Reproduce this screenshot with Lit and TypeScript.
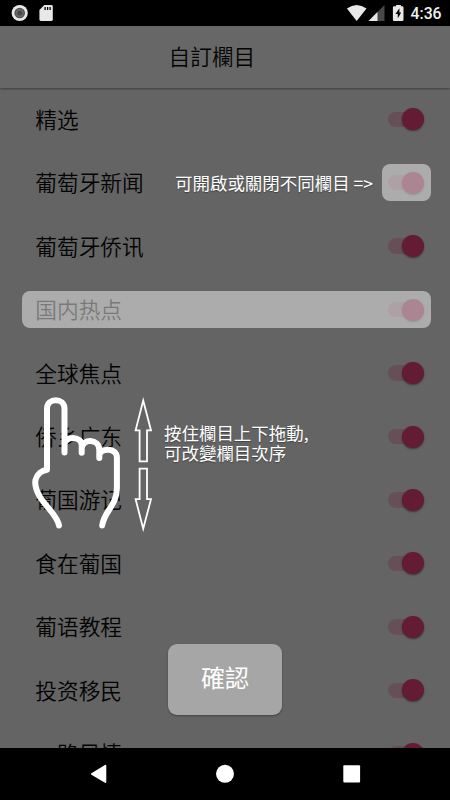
import { LitElement, html, css, svg } from "lit";
import { customElement, property } from "lit/decorators.js";

const CHANNELS = [
  "精选",
  "葡萄牙新闻",
  "葡萄牙侨讯",
  "国内热点",
  "全球焦点",
  "侨乡广东",
  "葡国游记",
  "食在葡国",
  "葡语教程",
  "投资移民",
  "一路风情",
];

@customElement("status-bar")
export class StatusBar extends LitElement {
  static styles = css`
    :host {
      display: flex;
      justify-content: space-between;
      height: 26px;
      background: #000;
    }
    svg {
      display: block;
      flex: none;
    }
    .side {
      display: flex;
    }
    .time {
      width: 39.5px;
      font: 500 15.8px/28px Roboto, "Noto Sans", sans-serif;
      color: #f0f0f0;
      white-space: nowrap;
    }
  `;
  render() {
    return html`
      <svg width="60" height="26" viewBox="0 0 60 26">
        <circle cx="19.7" cy="13" r="8.1" fill="#e8e8e8" />
        <circle cx="19.7" cy="13" r="5.3" fill="#505050" />
        <circle cx="19.7" cy="13" r="4" fill="#6c6c6c" />
        <circle cx="19.7" cy="13" r="2.6" fill="#484848" />
        <path
          d="M44.3 5H51.4Q52.8 5 52.8 6.4V19.6Q52.8 21 51.4 21H40.8Q39.4 21 39.4 19.6V10Z"
          fill="#e8e8e8"
        />
        <path d="M45.1 7v3M47.6 7v3M50.1 7v3" stroke="#000" stroke-width="1.3" />
      </svg>
      <div class="side">
        <svg width="65" height="26" viewBox="345.5 0 65 26">
          <path d="M346.4 8.6Q356.2 1.5 366 8.6L356.2 21Z" fill="#e8e8e8" />
          <path d="M384 5V21H368Z" fill="#484848" />
          <path d="M377 12V21H368Z" fill="#e8e8e8" />
          <path
            d="M395.6 5H400.4V6.3H401.8Q403 6.3 403 7.5V19.8Q403 21 401.8 21H393.6Q392.4 21 392.4 19.8V7.5Q392.4 6.3 393.6 6.3H395.6Z"
            fill="#e8e8e8"
          />
          <path d="M398.9 8.3L395 14H397.3V18.3L400.7 12.6H398.9Z" fill="#000" />
        </svg>
        <span class="time">4:36</span>
      </div>
    `;
  }
}

@customElement("channel-row")
export class ChannelRow extends LitElement {
  @property() label = "";

  static styles = css`
    :host {
      display: flex;
      flex: none;
      align-items: center;
      justify-content: space-between;
      box-sizing: border-box;
      height: 63.45px;
      padding: 0 25.6px 0 35.3px;
      font: 350 21.7px/32px "Noto Sans CJK SC", sans-serif;
      color: #030303;
    }
    span {
      padding-bottom: 1px;
    }
    .switch {
      display: flex;
      align-items: center;
      justify-content: flex-end;
      width: 36px;
      height: 15.4px;
      border-radius: 8px;
      background: linear-gradient(90deg, #674f57 30px, transparent 30px);
    }
    .thumb {
      width: 22px;
      height: 22px;
      border-radius: 50%;
      background: #641b34;
      box-shadow: 0 1px 2px rgba(0, 0, 0, 0.45);
    }
  `;
  render() {
    return html`<span>${this.label}</span>
      <div class="switch"><div class="thumb"></div></div>`;
  }
}

@customElement("guide-overlay")
export class GuideOverlay extends LitElement {
  static styles = css`
    :host {
      position: absolute;
      inset: 0;
      color: #fff;
      font: 400 17.48px/20.7px "Noto Sans CJK TC", sans-serif;
    }
    .light {
      position: absolute;
      background: rgba(255, 255, 255, 0.465);
      border-radius: 8px;
    }
    .switch-light {
      left: 382px;
      top: 164px;
      width: 49.3px;
      height: 37.3px;
    }
    .row-light {
      left: 22px;
      top: 290.5px;
      width: 409.3px;
      height: 37.5px;
    }
    .tip {
      position: absolute;
      margin: 0;
      white-space: nowrap;
      text-shadow: 0 1px 1px rgba(0, 0, 0, 0.35);
    }
    .toggle-tip {
      left: 175px;
      top: 173px;
    }
    .drag-tip {
      left: 164px;
      top: 423.4px;
      line-height: 20px;
    }
    .gesture {
      position: absolute;
      left: 30px;
      top: 390px;
    }
    .confirm {
      position: absolute;
      left: 168px;
      top: 644px;
      width: 114px;
      height: 71px;
      padding: 0 0 5px;
      border: 0;
      border-radius: 9px;
      background: #a6a6a6;
      box-shadow: 0 1px 2px rgba(0, 0, 0, 0.35);
      color: #fff;
      font: 400 24px/36px "Noto Sans CJK TC", sans-serif;
    }
  `;
  render() {
    const arrows = svg`
      <g fill="none" stroke="#fff" stroke-width="1.8" stroke-miterlimit="10">
        <path d="M143.2 400.6L151 430.4H147V461.3H139.6V430.4H135.6Z" />
        <path d="M143.2 528.8L151 499.2H147V468.6H139.6V499.2H135.6Z" />
      </g>`;
    return html`
      <div class="light switch-light"></div>
      <div class="light row-light"></div>
      <p class="tip toggle-tip">可開啟或關閉不同欄目 =&gt;</p>
      <p class="tip drag-tip">按住欄目上下拖動,<br />可改變欄目次序</p>
      <svg class="gesture" width="125" height="145" viewBox="30 390 125 145">
        <path
          d="M59 525.5C57.5 516 47 508 40 497C36 490 34.5 485 35.5 480C37 474 42 470.5 47 469.8V408.5C47 397.5 64.5 397.5 64.5 408.5V452.5M64.5 445C64.5 435.5 81.7 435.5 81.7 445.5V452.8M81.7 448.5C82 438.3 99.3 438.3 99.3 450V458M99.3 455C100.5 447.5 116.9 447.5 116.9 457.5V488C116.9 506 104 511 102.2 525.5"
          fill="none"
          stroke="#fff"
          stroke-width="6"
          stroke-linecap="round"
          stroke-linejoin="round"
        />
        ${arrows}
      </svg>
      <button class="confirm">確認</button>
    `;
  }
}

@customElement("nav-bar")
export class NavBar extends LitElement {
  static styles = css`
    :host {
      display: block;
      height: 52px;
      background: #000;
    }
    svg {
      display: block;
    }
  `;
  render() {
    return html`<svg width="450" height="52" viewBox="0 748 450 52" fill="#fff">
      <path
        d="M91.9 773.9L105.4 765.8V782Z"
        stroke="#fff"
        stroke-width="1.8"
        stroke-linejoin="round"
      />
      <circle cx="225" cy="773.8" r="9" />
      <rect x="343.3" y="765.3" width="16.8" height="17.2" rx="1" />
    </svg>`;
  }
}

@customElement("app-root")
export class AppRoot extends LitElement {
  static styles = css`
    :host {
      display: flex;
      flex-direction: column;
      position: relative;
      width: 450px;
      height: 800px;
      overflow: hidden;
      background: #646464;
    }
    status-bar,
    nav-bar,
    header {
      flex: none;
    }
    header {
      box-sizing: border-box;
      height: 61.6px;
      padding-left: 168.5px;
      background: #676767;
      box-shadow: 0 1px 2px rgba(0, 0, 0, 0.4);
      font: 350 21.7px/60px "Noto Sans CJK TC", sans-serif;
      color: #030303;
    }
    main {
      display: flex;
      flex-direction: column;
      flex: 1;
      min-height: 0;
      overflow: hidden;
    }
  `;
  render() {
    return html`
      <status-bar></status-bar>
      <header>自訂欄目</header>
      <main>${CHANNELS.map((c) => html`<channel-row .label=${c}></channel-row>`)}</main>
      <nav-bar></nav-bar>
      <guide-overlay></guide-overlay>
    `;
  }
}
